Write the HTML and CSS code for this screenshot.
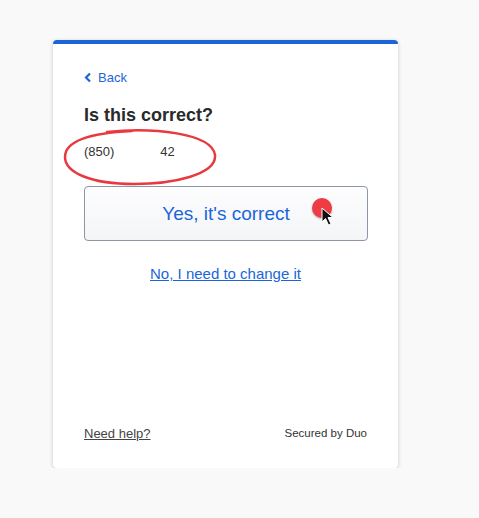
FILE: index.html
```html
<!DOCTYPE html>
<html lang="en">
<head>
<meta charset="UTF-8" />
<title>Duo — Is this correct?</title>
<link rel="stylesheet" href="styles.css">
</head>
<body>

<div class="card">
  <div class="card-body">
    <a href="#" class="back">
      <svg width="8" height="11" viewBox="0 0 8 11"><path d="M6 1.5 L2 5.5 L6 9.5" fill="none" stroke="#1a66d9" stroke-width="2.2"/></svg>
      Back
    </a>

    <h1>Is this correct?</h1>
    <div class="phone">
      <span>(850)</span><span class="tail">42</span>
      <svg class="circle" width="162" height="62" viewBox="0 0 162 62">
        <path d="M45 5 C90 0 150 6 153 28 C155 48 110 57 72 57 C30 57 3 46 3 30 C3 14 28 6 70 4" fill="none" stroke="#e8393f" stroke-width="2.5" stroke-linecap="round"/>
      </svg>
    </div>

    <button class="confirm">Yes, it's correct
      <span class="dot"></span>
      <svg class="cursor" width="14" height="20" viewBox="0 0 14 20"><path d="M1 1 L1 15 L4.5 11.5 L7.5 18 L10 17 L7 10.5 L12 10.5 Z" fill="#111" stroke="#fff" stroke-width="1"/></svg>
    </button>

    <div class="change"><a href="#">No, I need to change it</a></div>
  </div>

  <div class="card-footer">
    <a href="#">Need help?</a>
    <span>Secured by Duo</span>
  </div>
</div>

</body>
</html>
```

FILE: styles.css
```css
body {
  background: #f9f9f9;
  margin: 0;
  font-family: 'Liberation Sans', Arial, sans-serif;
}
.card {
  box-sizing: border-box;
  width: 345px;
  height: 428px;
  margin: 40px 0 0 53px;
  background: #fff;
  border-top: 4px solid #1a66d9;
  border-radius: 4px;
  box-shadow: 0 1px 4px rgba(0,0,0,0.2);
  padding: 0 31px;
  display: flex;
  flex-direction: column;
}
.card-body {
  flex: 1;
  padding-top: 26px;
}
.back {
  display: flex;
  align-items: center;
  gap: 6px;
  color: #1a66d9;
  text-decoration: none;
  font-size: 13px;
}
h1 {
  font-size: 18px;
  color: #2a2a2a;
  margin: 20px 0 0;
}
.phone {
  position: relative;
  font-size: 13px;
  color: #333;
  margin-top: 18px;
  height: 16px;
}
.phone .tail {
  margin-left: 46px;
}
.circle {
  position: absolute;
  left: -22px;
  top: -17px;
}
.confirm {
  position: relative;
  display: block;
  width: 284px;
  height: 55px;
  margin-top: 26px;
  background: linear-gradient(#fdfdfe, #f4f5f7);
  border: 1px solid #8c96a4;
  border-radius: 4px;
  color: #1a66d9;
  font-family: 'Liberation Sans', Arial, sans-serif;
  font-size: 19px;
  cursor: pointer;
}
.dot {
  position: absolute;
  left: 227px;
  top: 11px;
  width: 20px;
  height: 20px;
  border-radius: 50%;
  background: #ee3b44;
  box-shadow: 0 1px 2px rgba(0,0,0,0.3);
}
.cursor {
  position: absolute;
  left: 236px;
  top: 20px;
}
.change {
  text-align: center;
  margin-top: 24px;
  font-size: 15px;
}
.change a {
  color: #1a66d9;
}
.card-footer {
  display: flex;
  justify-content: space-between;
  align-items: center;
  height: 28px;
  margin-bottom: 21px;
  font-size: 11.5px;
  color: #333;
}
.card-footer a {
  color: #444;
  font-size: 13px;
}
```
